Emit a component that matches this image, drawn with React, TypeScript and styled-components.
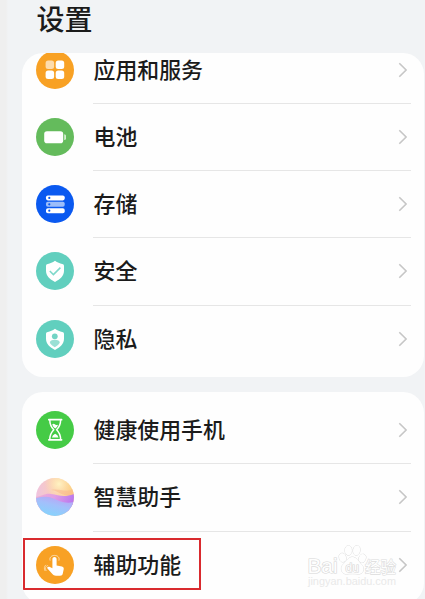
import React from "react";
import styled, { createGlobalStyle } from "styled-components";

const GlobalStyle = createGlobalStyle`
  * { box-sizing: border-box; }
  html, body { margin: 0; padding: 0; overflow: hidden; background: #f1f3f5; }
`;

const Page = styled.main`
  height: 599px;
  overflow: hidden;
  padding: 0 1px 0 22px;
  background: linear-gradient(to right, #efefef 0 6px, #f1f3f5 8px);
  font-family: "Noto Sans CJK SC", sans-serif;
  color: #1b1b1b;
`;

const Title = styled.h1`
  margin: 0;
  height: 53px;
  padding: 0 0 0 14.5px;
  font-size: 28px;
  line-height: 37px;
  font-weight: 500;
`;

const Card = styled.section<{ $scrolled?: boolean }>`
  height: ${(p) => (p.$scrolled ? 324 : 212)}px;
  margin-bottom: 15px;
  border-radius: 21px;
  background: #fefefe;
  overflow: hidden;
`;

const List = styled.ul<{ $offset: number }>`
  list-style: none;
  margin: ${(p) => p.$offset}px 0 0;
  padding: 0;
`;

const Row = styled.li`
  position: relative;
  display: flex;
  align-items: center;
  height: 67.3px;
  padding-left: 14px;
`;

const Glyph = styled.svg`
  display: block;
  flex: none;
  width: 38px;
  height: 38px;
  margin-bottom: 1px;
`;

const Content = styled.div<{ $last: boolean }>`
  flex: 1;
  display: flex;
  align-items: center;
  justify-content: space-between;
  height: 100%;
  margin: 0 13px 0 19px;
  padding-right: 3px;
  border-bottom: 1px solid ${(p) => (p.$last ? "transparent" : "#e6e6e6")};
`;

const Label = styled.span`
  padding: 0 0 2px 0.5px;
  font-size: 21.9px;
  line-height: 30px;
  font-weight: 500;
  white-space: nowrap;
`;

const Arrow = styled.svg`
  display: block;
  width: 10px;
  height: 16px;
`;

const Highlight = styled.div`
  position: absolute;
  left: 1px;
  top: 6px;
  width: 178px;
  height: 52px;
  border: 2px solid #d92a2e;
`;

const Watermark = styled.svg`
  position: absolute;
  left: 283px;
  top: 10px;
  width: 96px;
  height: 46px;
`;

const AppsIcon = () => (
  <Glyph viewBox="0 0 38 38">
    <circle cx="19" cy="19" r="19" fill="#f8a124" />
    <rect x="9.6" y="9.5" width="8.5" height="8.5" rx="2.5" fill="#fddcad" />
    <rect x="19.7" y="9.5" width="8.5" height="8.5" rx="2.5" fill="#fff" />
    <rect x="9.6" y="19.6" width="8.5" height="8.5" rx="2.5" fill="#fff" />
    <rect x="19.7" y="19.6" width="8.5" height="8.5" rx="2.5" fill="#fff" />
  </Glyph>
);

const BatteryIcon = () => (
  <Glyph viewBox="0 0 38 38">
    <circle cx="19" cy="19" r="19" fill="#64bb5c" />
    <rect x="8.2" y="13.2" width="19" height="12" rx="2.8" fill="#fff" />
    <path d="M28.2 16.3q1.8 0 1.8 1.5v2.8q0 1.5-1.8 1.5z" fill="#d4eed1" />
  </Glyph>
);

const StorageIcon = () => (
  <Glyph viewBox="0 0 38 38">
    <circle cx="19" cy="19" r="19" fill="#0a59f0" />
    <rect x="10" y="10.4" width="18.7" height="5" rx="1.8" fill="#fff" />
    <rect x="10" y="16.8" width="18.7" height="5" rx="1.8" fill="#9cbdf9" />
    <rect x="10" y="23.2" width="18.7" height="5" rx="1.8" fill="#fff" />
    <g fill="#0a59f0">
      <circle cx="13.3" cy="12.9" r="1.1" />
      <circle cx="13.3" cy="19.3" r="1.1" />
      <circle cx="13.3" cy="25.7" r="1.1" />
    </g>
  </Glyph>
);

const shield =
  "M19 8.8c2.4 1.8 4.9 2.8 7.2 3.1q1.8.3 1.8 1.8v5.1c0 5-3.6 8.6-9 11.1-5.4-2.5-9-6.1-9-11.1v-5.1q0-1.5 1.8-1.8c2.3-.3 4.8-1.3 7.2-3.1z";

const SecurityIcon = () => (
  <Glyph viewBox="0 0 38 38">
    <circle cx="19" cy="19" r="19" fill="#61cfbe" />
    <path d={shield} fill="#fff" />
    <path d="M13.8 19l3.6 3.6 7-7" fill="none" stroke="#7ed8ca" strokeWidth="1.5" />
  </Glyph>
);

const PrivacyIcon = () => (
  <Glyph viewBox="0 0 38 38">
    <circle cx="19" cy="19" r="19" fill="#61cfbe" />
    <path d={shield} fill="#fff" />
    <circle cx="18.8" cy="16.3" r="2.9" fill="#72d4c5" />
    <path d="M13.8 22.8c0-2 2-3.1 5-3.1s5 1.1 5 3.1c-1 1.9-3 3.4-5 4.5-2-1.1-4-2.6-5-4.5z" fill="#9be0d5" />
  </Glyph>
);

const HourglassIcon = () => (
  <Glyph viewBox="0 0 38 38">
    <circle cx="19" cy="19" r="19" fill="#45cb46" />
    <g fill="none" stroke="#fff" strokeWidth="1.5" strokeLinejoin="round" strokeLinecap="round">
      <path d="M12.8 8.7h12.8M12.8 28.8h12.8" strokeWidth="1.7" />
      <path d="M13.8 9c0 4.7 1.2 7 4 9.8-2.8 2.7-4 5.1-4 9.7M24.6 9c0 4.7-1.2 7-4 9.8 2.8 2.7 4 5.1 4 9.7" />
    </g>
    <path d="M16.2 13.4q1.4-1.2 3 0t3 0q-.7 2.3-3 4.2-2.3-1.9-3-4.2zM15.9 26.6q.6-2.8 3.3-3.8 2.7 1 3.3 3.8z" fill="#fff" />
  </Glyph>
);

const AssistantIcon = () => (
  <Glyph viewBox="0 0 38 38">
    <defs>
      <linearGradient id="orbTop" x1="0" y1=".3" x2="1" y2=".2">
        <stop offset="0" stopColor="#efc3df" />
        <stop offset=".5" stopColor="#fbcdb8" />
        <stop offset="1" stopColor="#fcd07c" />
      </linearGradient>
      <radialGradient id="orbGlow">
        <stop offset="0" stopColor="#fff3c4" />
        <stop offset="1" stopColor="#ffe3a0" stopOpacity="0" />
      </radialGradient>
      <linearGradient id="orbWave" x1="0" y1="0" x2="1" y2=".2">
        <stop offset="0" stopColor="#f2b0d2" />
        <stop offset=".5" stopColor="#e09ee6" />
        <stop offset="1" stopColor="#ba78ee" />
      </linearGradient>
      <linearGradient id="orbBase" x1=".9" y1="0" x2=".4" y2="1">
        <stop offset="0" stopColor="#c49af2" />
        <stop offset=".5" stopColor="#a3bffb" />
        <stop offset="1" stopColor="#86d3fc" />
      </linearGradient>
      <clipPath id="orbClip">
        <circle cx="19" cy="19" r="19" />
      </clipPath>
    </defs>
    <g clipPath="url(#orbClip)">
      <rect width="38" height="38" fill="url(#orbTop)" />
      <circle cx="23" cy="6" r="14" fill="url(#orbGlow)" />
      <path d="M15 12c7 0 10 7 23 5V10C31 16 24 10 15 12z" fill="#f9b48c" opacity=".5" />
      <path d="M0 19c7-1 9-4 15-3 8 1 12 4 23 0v18H0z" fill="url(#orbWave)" />
      <path d="M0 20c6-1 10-2 16 0 8 3 12 6 22 4v14H0z" fill="url(#orbBase)" />
    </g>
  </Glyph>
);

const TouchIcon = () => (
  <Glyph viewBox="0 0 38 38">
    <circle cx="19" cy="19" r="19" fill="#f8a124" />
    <path
      d="M16.4 13.2c0-2.8 4.2-2.8 4.2 0v6.2l5.3 1.1c1.6.4 2 1.3 1.8 2.7l-.9 4.4c-.3 1.4-1.2 2.2-2.7 2.2h-4.2c-1.6 0-2.5-.5-3.5-1.7l-4.7-5.4c-1.2-1.4.2-2.5 1.7-1.9l3 1.4z"
      fill="#fff"
    />
    <g fill="none" stroke="#fee0b3" strokeLinecap="round">
      <path d="M14 14.2c-1.9-6.4 10.9-6.6 9 0" strokeWidth="1" />
      <path d="M11.7 19.6c-2.5.7-2.9 2.8-1.6 5M9.6 19.1c-1.4 1.2-1.7 3.5-.7 5.5" strokeWidth=".8" />
    </g>
  </Glyph>
);

const WatermarkLogo = () => (
  <Watermark viewBox="0 0 96 46">
    <g fill="#fefefe" stroke="#d6d6d6" strokeWidth=".8" paintOrder="stroke">
      <ellipse cx="37.6" cy="15.6" rx="3.4" ry="4.4" transform="rotate(-15 37.6 15.6)" />
      <ellipse cx="43.4" cy="8.4" rx="3.5" ry="4.9" />
      <ellipse cx="51.6" cy="8.4" rx="3.5" ry="4.9" transform="rotate(10 51.6 8.4)" />
      <ellipse cx="57.3" cy="16.4" rx="3.4" ry="4.4" transform="rotate(20 57.3 16.4)" />
      <path d="M47.4 15c4 0 5.8 4.3 8.8 7.1 4.4 4.2 2 10.6-3.2 10-3.8-.5-7.6-.5-11.2 0-4.9.6-7.7-6.2-3.3-10 2.9-2.8 4.9-7.1 8.9-7.1z" />
      <g fontFamily='"Liberation Sans", sans-serif' strokeWidth="1.2">
        <text x="2.5" y="31" fontSize="20.5" textLength="30" lengthAdjust="spacingAndGlyphs">Bai</text>
        <text x="40.5" y="29.5" fontSize="12">du</text>
      </g>
      <text x="60" y="31" fontFamily='"Noto Sans CJK SC", sans-serif' fontSize="15.5" stroke="#dcdcdc" strokeWidth="1.1">经验</text>
      <text x="3" y="42.5" fontFamily='"Liberation Sans", sans-serif' fontSize="10.5" textLength="88" lengthAdjust="spacingAndGlyphs" fill="#e9e9e9" stroke="none">jingyan.baidu.com</text>
    </g>
  </Watermark>
);

type Item = { label: string; Icon: React.FC; highlighted?: boolean };

const deviceItems: Item[] = [
  { label: "应用和服务", Icon: AppsIcon },
  { label: "电池", Icon: BatteryIcon },
  { label: "存储", Icon: StorageIcon },
  { label: "安全", Icon: SecurityIcon },
  { label: "隐私", Icon: PrivacyIcon },
];

const featureItems: Item[] = [
  { label: "健康使用手机", Icon: HourglassIcon },
  { label: "智慧助手", Icon: AssistantIcon },
  { label: "辅助功能", Icon: TouchIcon, highlighted: true },
];

const SettingsList = ({ items, offset }: { items: Item[]; offset: number }) => (
  <List $offset={offset}>
    {items.map(({ label, Icon, highlighted }, i) => (
      <Row key={label}>
        <Icon />
        <Content $last={i === items.length - 1}>
          <Label>{label}</Label>
          <Arrow viewBox="0 0 10 16">
            <path d="M1.3 1.2L8.1 8l-6.8 6.8" fill="none" stroke="#c6c6c6" strokeWidth="1.6" />
          </Arrow>
        </Content>
        {highlighted && (
          <>
            <WatermarkLogo />
            <Highlight />
          </>
        )}
      </Row>
    ))}
  </List>
);

export default function App() {
  return (
    <>
      <GlobalStyle />
      <Page>
        <Title>设置</Title>
        <Card $scrolled>
          <SettingsList items={deviceItems} offset={-16.6} />
        </Card>
        <Card>
          <SettingsList items={featureItems} offset={5} />
        </Card>
      </Page>
    </>
  );
}
